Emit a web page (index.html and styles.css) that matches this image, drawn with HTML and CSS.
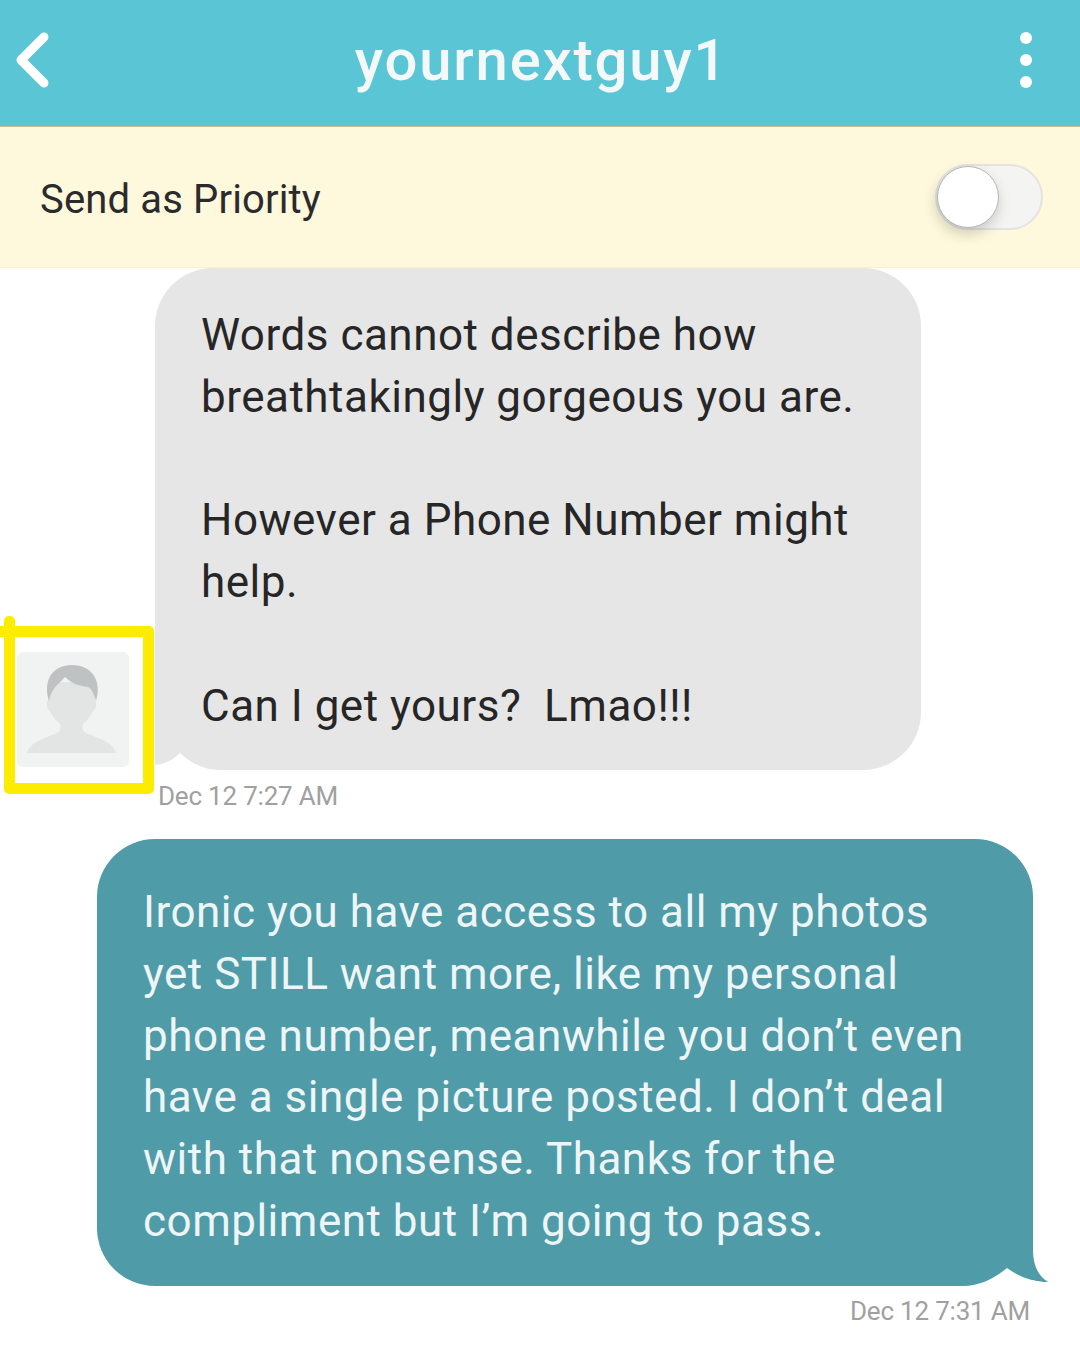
FILE: index.html
```html
<!DOCTYPE html>
<html lang="en">
<head>
    <meta charset="UTF-8">
    <meta name="viewport" content="width=device-width, initial-scale=1.0">
    <title>yournextguy1</title>
    <link rel="stylesheet" href="styles.css">
</head>
<body>
    <header class="topbar">
        <svg class="back-icon" width="36" height="60" viewBox="0 0 36 60">
            <path d="M31 7 L8 30 L31 53" fill="none" stroke="#fff" stroke-width="9" stroke-linecap="round" stroke-linejoin="round"/>
        </svg>
        <h1 class="topbar-title">yournextguy1</h1>
        <div class="more-icon">
            <span></span><span></span><span></span>
        </div>
    </header>

    <div class="priority">
        <span class="priority-label">Send as Priority</span>
        <div class="switch"><div class="switch-knob"></div></div>
    </div>

    <main class="thread">
        <div class="msg-row">
            <div class="avatar">
                <svg width="112" height="115" viewBox="0 0 112 115">
                    <path d="M10 101 C13 90 28 86 40 81 C44 79 44 75 43 72 C38 68 35 63 33 59 L31 57 C29 54 30 50 31 47 L33 30 L76 30 L78 47 C79 50 80 54 78 57 L76 59 C74 63 71 68 66 72 C65 75 65 79 69 81 C81 86 96 90 99 101 Z" fill="#e3e4e4"/>
                    <path d="M32 49 C26 30 34 13 55 13 C76 13 85 30 79 49 C77 42 75 37 71 35 C62 34 54 31 48 25 C42 32 34 36 32 49 Z" fill="#bfc2c3"/>
                </svg>
                <div class="highlight"></div>
                <div class="highlight-tick"></div>
                <div class="highlight-stub"></div>
            </div>
            <div class="bubble bubble-in">
                <svg class="tail-in" width="70" height="30" viewBox="0 0 70 30">
                    <path d="M25 13 C33 21 48 30 65 30 L0 30 L0 25 C10 24 18 20 25 13 Z" fill="#fff"/>
                </svg>
                <p class="bubble-text">Words cannot describe how
breathtakingly gorgeous you are.

However a Phone Number might
help.

Can I get yours?  Lmao!!!</p>
            </div>
        </div>
        <div class="time time-in">Dec 12 7:27 AM</div>

        <div class="bubble bubble-out">
            <svg class="tail-out" width="90" height="50" viewBox="0 0 90 50">
                <path d="M73 10 C73 25 78 36 88 42 C72 42 58 36 47 28 L47 10 Z" fill="#4f9ba8"/>
                <path d="M47 28 C58 36 72 42 88 42 L88 50 L3 50 L3 46 C20 46 35 38 47 28 Z" fill="#fff"/>
            </svg>
            <p class="bubble-text">Ironic you have access to all my photos
yet STILL want more, like my personal
phone number, meanwhile you don’t even
have a single picture posted. I don’t deal
with that nonsense. Thanks for the
compliment but I’m going to pass.</p>
        </div>
        <div class="time time-out">Dec 12 7:31 AM</div>
    </main>
</body>
</html>
```

FILE: styles.css
```css
body {
    margin: 0;
    background: #fff;
    font-family: Roboto, "Liberation Sans", sans-serif;
    color: #2b2b2b;
}
.topbar {
    height: 126px;
    background: #5ac5d4;
    display: flex;
    align-items: center;
    justify-content: space-between;
    padding: 0 48px 6px 13px;
    box-sizing: border-box;
}
.topbar-title {
    margin: 0;
    padding-left: 14px;
    font-size: 58px;
    font-weight: 500;
    letter-spacing: 1.8px;
    color: #f4f8f9;
}
.more-icon {
    display: flex;
    flex-direction: column;
    gap: 10px;
}
.more-icon span {
    display: block;
    width: 12px;
    height: 12px;
    border-radius: 50%;
    background: #fff;
}
.priority {
    height: 142px;
    box-sizing: border-box;
    background: #fef8dc;
    border-top: 1px solid #cdbf8e;
    border-bottom: 1px solid #f6efd6;
    display: flex;
    align-items: center;
    justify-content: space-between;
    padding: 0 37px 0 40px;
}
.priority-label {
    margin-top: 5px;
    font-size: 40px;
    letter-spacing: 0.15px;
}
.switch {
    width: 108px;
    height: 66px;
    box-sizing: border-box;
    border: 2px solid #e4e3e1;
    border-radius: 33px;
    background: #f4f4f3;
    position: relative;
}
.switch-knob {
    position: absolute;
    left: 0;
    top: 0;
    width: 60px;
    height: 60px;
    background: #fff;
    border: 1px solid #b5b5b8;
    border-radius: 50%;
    box-shadow: -1px 6px 14px rgba(0, 0, 0, 0.18);
}
.msg-row {
    display: flex;
    align-items: flex-end;
    padding-left: 17px;
}
.avatar {
    width: 112px;
    height: 115px;
    margin: 0 26px 3px 0;
    background: #f1f2f2;
    border-radius: 6px;
    position: relative;
    z-index: 1;
}
.highlight {
    position: absolute;
    left: -13px;
    top: -26px;
    width: 150px;
    height: 168px;
    box-sizing: border-box;
    border: 11px solid #fdec00;
    border-radius: 5px;
}
.highlight-tick {
    position: absolute;
    left: -13px;
    top: -36px;
    width: 11px;
    height: 14px;
    background: #fdec00;
    border-radius: 5px 5px 0 0;
}
.highlight-stub {
    position: absolute;
    left: -17px;
    top: -26px;
    width: 6px;
    height: 11px;
    background: #fdec00;
}
.bubble {
    box-sizing: border-box;
    position: relative;
}
.bubble-text {
    margin: 0;
    white-space: pre-wrap;
    font-size: 44px;
    line-height: 61.8px;
    letter-spacing: 0.5px;
}
.bubble-in {
    width: 766px;
    height: 502px;
    background: #e6e6e6;
    border-radius: 58px 58px 58px 0;
    padding: 37px 20px 0 46px;
    color: #262626;
}
.tail-in {
    position: absolute;
    left: 0;
    bottom: 0;
}
.time {
    font-size: 26px;
    line-height: 34px;
    letter-spacing: -0.2px;
    color: #a0a0a0;
}
.time-in {
    margin: 9px 0 0 158px;
}
.bubble-out {
    width: 936px;
    height: 447px;
    margin: 26px 0 0 97px;
    background: #4f9ba8;
    border-radius: 58px 58px 0 58px;
    padding: 43px 20px 0 46px;
    color: #eef5f6;
}
.tail-out {
    position: absolute;
    right: -17px;
    bottom: -4px;
}
.time-out {
    margin: 8px 50px 0 0;
    text-align: right;
}
```
